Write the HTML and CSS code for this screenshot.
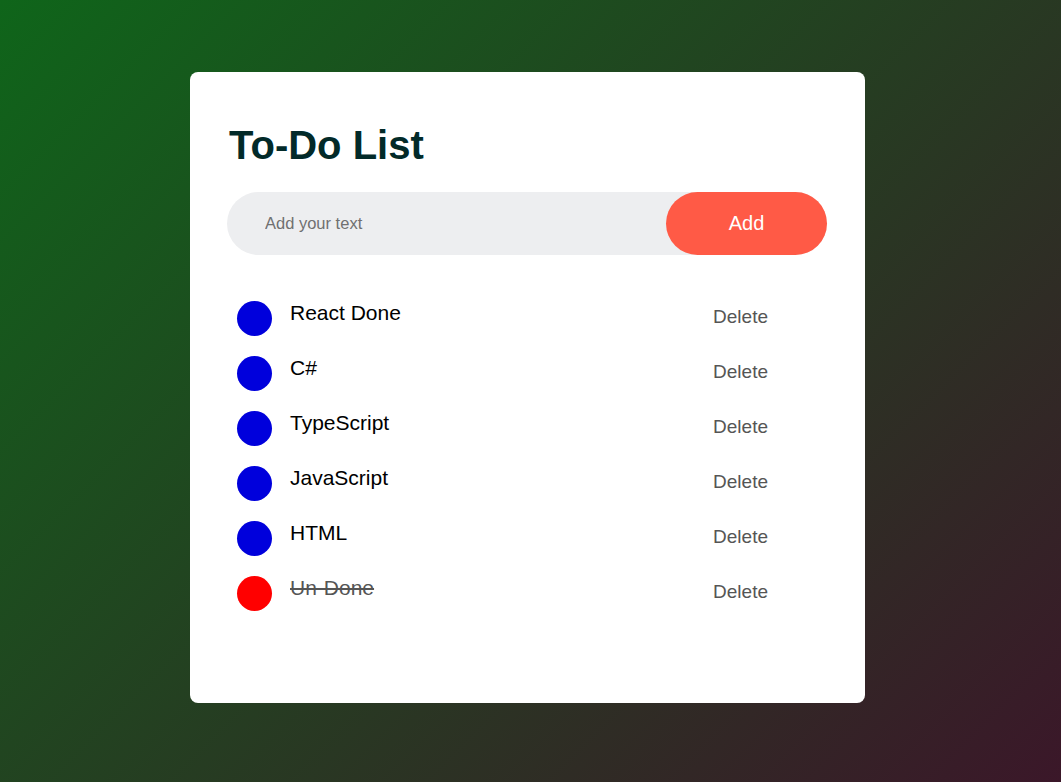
FILE: index.html
```html
<!DOCTYPE html>
<html lang="en">
<head>
<meta charset="utf-8">
<title>To-Do List</title>
<link rel="stylesheet" href="styles.css">
</head>
<body>
<div class="container">
  <div class="todo-app">
    <h2 class="title">To-Do List</h2>
    <div class="row">
      <input class="text-input" type="text" placeholder="Add your text">
      <button class="add-btn">Add</button>
    </div>
    <ul class="list">
      <li class="item"><span class="dot"></span><span class="label">React Done</span><span class="delete">Delete</span></li>
      <li class="item"><span class="dot"></span><span class="label">C#</span><span class="delete">Delete</span></li>
      <li class="item"><span class="dot"></span><span class="label">TypeScript</span><span class="delete">Delete</span></li>
      <li class="item"><span class="dot"></span><span class="label">JavaScript</span><span class="delete">Delete</span></li>
      <li class="item"><span class="dot"></span><span class="label">HTML</span><span class="delete">Delete</span></li>
      <li class="item checked"><span class="dot"></span><span class="label">Un-Done</span><span class="delete">Delete</span></li>
    </ul>
  </div>
</div>
</body>
</html>
```
FILE: styles.css
```css
* { box-sizing: border-box; margin: 0; padding: 0; }
html, body { height: 100%; }
body {
  font-family: "Liberation Sans", Arial, sans-serif;
}
.container {
  width: 100%;
  min-height: 100vh;
  background: linear-gradient(135deg, #0f651a, #3b1729);
  padding-top: 72px;
  padding-left: 190px;
}
.todo-app {
  width: 675px;
  height: 631px;
  background: #fff;
  border-radius: 8px;
  padding: 50px 38px 0 37px;
}
.title {
  font-size: 40px;
  line-height: 46px;
  font-weight: bold;
  color: #022a29;
  margin-bottom: 24px;
  padding-left: 2px;
}
.row {
  display: flex;
  align-items: center;
  background: #edeef0;
  border-radius: 32px;
  height: 63px;
  padding-left: 38px;
  margin-bottom: 36px;
}
.text-input {
  flex: 1;
  border: none;
  outline: none;
  background: transparent;
  font-family: "Liberation Sans", Arial, sans-serif;
  font-size: 16.5px;
  color: #333;
}
.text-input::placeholder { color: #707070; }
.add-btn {
  border: none;
  outline: none;
  width: 161px;
  height: 63px;
  background: #ff5a46;
  color: #fff;
  font-family: "Liberation Sans", Arial, sans-serif;
  font-size: 20px;
  border-radius: 32px;
}
.list { list-style: none; }
.item {
  display: flex;
  align-items: flex-start;
  height: 55px;
  padding: 10px 0 10px 10px;
}
.dot {
  width: 35px;
  height: 35px;
  border-radius: 50%;
  background: #0000dc;
  flex-shrink: 0;
}
.label {
  flex: 1;
  margin-left: 18px;
  font-size: 21px;
  line-height: 24px;
  color: #000;
}
.delete {
  font-size: 19px;
  padding-top: 5px;
  color: #555;
  margin-right: 59px;
}
.checked .dot { background: #ff0000; }
.checked .label { color: #555; text-decoration: line-through; }
```
